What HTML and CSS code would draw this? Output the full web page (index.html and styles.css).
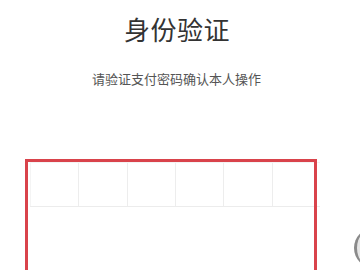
FILE: index.html
```html
<!DOCTYPE html>
<html lang="zh-CN">
<head>
<meta charset="utf-8">
<link rel="stylesheet" href="styles.css">
</head>
<body>
<main class="page">
  <h1 class="title">身份验证</h1>
  <p class="subtitle">请验证支付密码确认本人操作</p>
  <div class="pin">
    <div class="cell"></div>
    <div class="cell"></div>
    <div class="cell"></div>
    <div class="cell"></div>
    <div class="cell"></div>
    <div class="cell"></div>
  </div>
  <div class="highlight"></div>
  <div class="knob"></div>
</main>
</body>
</html>
```
FILE: styles.css
```css
html, body {
  margin: 0;
  padding: 0;
  background: #ffffff;
  overflow: hidden;
}
.page {
  position: relative;
  width: 360px;
  height: 270px;
  overflow: hidden;
  display: flex;
  flex-direction: column;
  align-items: center;
  font-family: "Noto Sans CJK SC", "Noto Sans", sans-serif;
}
.title {
  margin: 16px 0 0;
  padding-right: 6px;
  font-size: 26px;
  line-height: 26px;
  font-weight: 400;
  color: #333333;
  letter-spacing: 0.5px;
}
.subtitle {
  margin: 30px 0 0;
  padding-right: 7px;
  font-size: 13px;
  line-height: 13px;
  color: #555555;
}
.pin {
  align-self: flex-start;
  margin: 77px 0 0 30px;
  width: 290px;
  height: 43px;
  display: grid;
  grid-template-columns: repeat(6, 1fr);
  border-bottom: 1px solid #ececec;
  border-top: 1px solid #f4f4f4;
}
.cell {
  border-left: 1px solid #ededed;
}
.cell:first-child {
  border-left: 1px solid #f4f4f4;
}
.highlight {
  position: absolute;
  left: 25px;
  top: 159px;
  width: 286px;
  height: 130px;
  border: 3px solid #d9434b;
}
.knob {
  position: absolute;
  left: 354px;
  top: 228px;
  width: 40px;
  height: 40px;
  border-radius: 50%;
  background: #e6e6e6;
  border-left: 3px solid #8a8a8a;
  box-sizing: border-box;
}
```
